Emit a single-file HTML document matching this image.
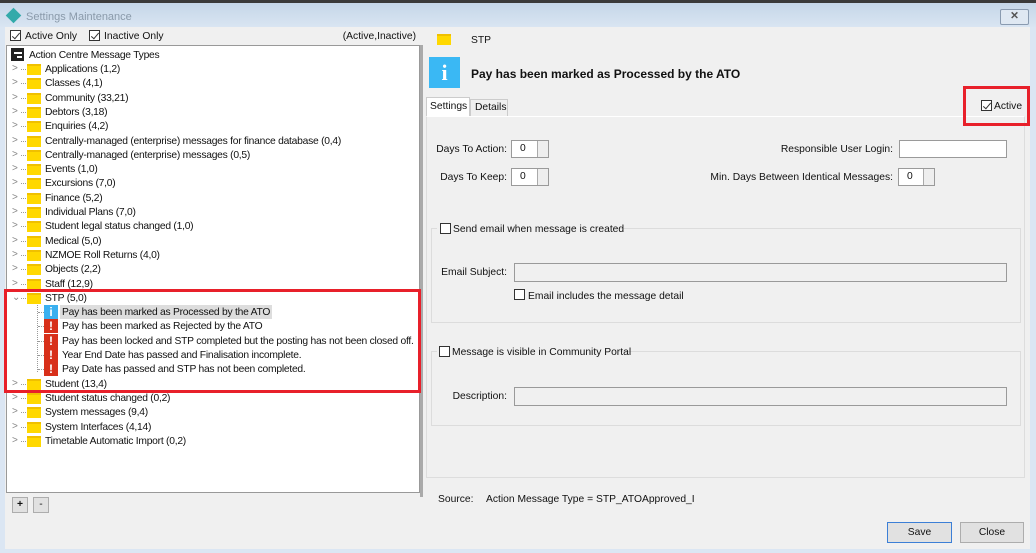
<!DOCTYPE html>
<html><head><meta charset="utf-8"><style>
*{box-sizing:border-box;margin:0;padding:0}
body{width:1036px;height:553px;overflow:hidden;background:#dbe6f3;font-family:"Liberation Sans",sans-serif;font-size:10.3px;color:#111;position:relative}
.a{position:absolute;white-space:nowrap}
.r{position:absolute;white-space:nowrap;text-align:right}
.row{position:absolute;height:14px;line-height:15px;white-space:nowrap;letter-spacing:-0.25px}
.fold{position:absolute;width:14px;height:11px;background:#ffd800;border-top:2px solid #f0c000}
.chev{position:absolute;color:#888;font-size:10px}
.cb{position:absolute;width:11px;height:11px;border:1px solid #333;background:#fff}
.cb.c::after{content:"";position:absolute;left:3px;top:0px;width:3px;height:7px;border:solid #333;border-width:0 1.3px 1.3px 0;transform:rotate(40deg)}
.inp{position:absolute;background:#fff;border:1px solid #9a9a9a}
.inp.g{background:#f0f0f0}
.spin{position:absolute;height:18px;border:1px solid #9a9a9a;background:#fff}
.spin span{position:absolute;left:8px;top:2px}
.spin i{position:absolute;right:0;width:11px;height:8px;border-left:1px solid #aaa;background:#eee}
.ic{position:absolute;width:14px;height:14px;color:#fff;font-weight:bold;text-align:center;line-height:14px;font-size:12px}
.btn{position:absolute;height:21px;border:1px solid #adadad;background:#e1e1e1;text-align:center;line-height:19px}
</style></head><body>
<div class="a" style="left:0;top:0;width:1036px;height:3px;background:#3a3a3a"></div>
<div class="a" style="left:0;top:3px;width:1036px;height:24px;background:linear-gradient(#c5d6e8,#d9e5f2)"></div>
<div class="a" style="left:8px;top:10px;width:11px;height:11px;background:#3aa;transform:rotate(45deg)"></div>
<div class="a" style="left:26px;top:11px;color:#8a9aaa;font-size:11px">Settings Maintenance</div>
<div class="a" style="left:1000px;top:9px;width:29px;height:16px;border:1px solid #8a9bb0;border-radius:2px;background:#dfe8f2;text-align:center;line-height:13px;color:#555;font-weight:bold">✕</div>
<div class="a" style="left:5px;top:27px;width:1025px;height:522px;background:#f0f0f0"></div>

<div class="cb c" style="left:10px;top:30px"></div><div class="a" style="left:25px;top:31px">Active Only</div>
<div class="cb c" style="left:89px;top:30px"></div><div class="a" style="left:104px;top:31px">Inactive Only</div>
<div class="r" style="right:620px;top:31px">(Active,Inactive)</div>
<div class="a" style="left:6px;top:45px;width:414px;height:448px;background:#fff;border:1px solid #999"></div>
<div class="a" style="left:420px;top:45px;width:3px;height:452px;background:#aaa"></div>

<div class="a" style="left:11px;top:48px;width:13px;height:13px;background:#222"></div>
<div class="a" style="left:14px;top:52px;width:8px;height:2px;background:#fff"></div>
<div class="a" style="left:17px;top:56px;width:5px;height:2px;background:#fff"></div>
<div class="row" style="left:29px;top:48px">Action Centre Message Types</div>

<div class="a" style="left:37px;top:305px;width:0;height:67px;border-left:1px dotted #999"></div>

<div id="tree"></div>
<script>
var items=[["Applications (1,2)"],["Classes (4,1)"],["Community (33,21)"],["Debtors (3,18)"],["Enquiries (4,2)"],["Centrally-managed (enterprise) messages for finance database (0,4)"],["Centrally-managed (enterprise) messages (0,5)"],["Events (1,0)"],["Excursions (7,0)"],["Finance (5,2)"],["Individual Plans (7,0)"],["Student legal status changed (1,0)"],["Medical (5,0)"],["NZMOE Roll Returns (4,0)"],["Objects (2,2)"],["Staff (12,9)"],["STP (5,0)","open"],["Pay has been marked as Processed by the ATO","i"],["Pay has been marked as Rejected by the ATO","e"],["Pay has been locked and STP completed but the posting has not been closed off.","e"],["Year End Date has passed and Finalisation incomplete.","e"],["Pay Date has passed and STP has not been completed.","e"],["Student (13,4)"],["Student status changed (0,2)"],["System messages (9,4)"],["System Interfaces (4,14)"],["Timetable Automatic Import (0,2)"]];
var h="";
items.forEach(function(it,i){var t=62+i*14.3;
if(it[1]=="i"||it[1]=="e"){
 h+='<div class="a" style="left:38px;top:'+(t+7)+'px;width:6px;border-top:1px dotted #999"></div>';
 h+='<div class="ic" style="left:44px;top:'+t+'px;background:'+(it[1]=="i"?'#3ab0f0':'#d8301a')+'">'+(it[1]=="i"?'i':'!')+'</div>';
 h+='<div class="row" style="left:60px;top:'+t+'px;padding:0 2px;'+(it[1]=="i"?'background:#ddd;':'')+'">'+it[0]+'</div>';
}else{
 h+='<div class="chev" style="left:12px;top:'+(t+1)+'px">'+(it[1]=="open"?'&#8964;':'&gt;')+'</div>';
 h+='<div class="a" style="left:21px;top:'+(t+7)+'px;width:5px;border-top:1px dotted #999"></div>';
 h+='<div class="fold" style="left:27px;top:'+(t+2)+'px"></div>';
 h+='<div class="row" style="left:45px;top:'+t+'px">'+it[0]+'</div>';
}});
document.getElementById("tree").innerHTML=h;
</script>
<div class="a" style="left:4px;top:289px;width:417px;height:104px;border:3px solid #e8202a"></div>

<div class="btn" style="left:12px;top:497px;width:16px;height:16px;line-height:14px;font-weight:bold">+</div>
<div class="btn" style="left:33px;top:497px;width:16px;height:16px;line-height:14px">-</div>

<!-- right -->
<div class="fold" style="left:437px;top:34px"></div>
<div class="a" style="left:471px;top:35px">STP</div>
<div class="a" style="left:429px;top:57px;width:31px;height:31px;background:#3ab8f4;color:#fff;font:bold 22px 'Liberation Serif',serif;text-align:center;line-height:31px">i</div>
<div class="a" style="left:471px;top:67px;font-weight:bold;font-size:12px">Pay has been marked as Processed by the ATO</div>
<div class="a" style="left:426px;top:97px;width:44px;height:20px;background:#fff;border:1px solid #ccc;border-bottom:none;padding:3px 3px">Settings</div>
<div class="a" style="left:470px;top:99px;width:38px;height:17px;border:1px solid #ccc;border-bottom:none;padding:2px 4px">Details</div>
<div class="a" style="left:426px;top:116px;width:599px;height:362px;border:1px solid #ddd;background:#f0f0f0;border-top-color:#fff"></div>
<div class="cb c" style="left:981px;top:100px"></div><div class="a" style="left:994px;top:101px">Active</div>
<div class="a" style="left:963px;top:86px;width:67px;height:40px;border:3px solid #e8202a"></div>

<div class="r" style="right:529px;top:144px">Days To Action:</div>
<div class="spin" style="left:511px;top:140px;width:38px"><span>0</span><i style="top:0"></i><i style="top:8px"></i></div>
<div class="r" style="right:529px;top:172px">Days To Keep:</div>
<div class="spin" style="left:511px;top:168px;width:38px"><span>0</span><i style="top:0"></i><i style="top:8px"></i></div>
<div class="r" style="right:143px;top:144px">Responsible User Login:</div>
<div class="inp" style="left:899px;top:140px;width:108px;height:18px"></div>
<div class="r" style="right:143px;top:172px">Min. Days Between Identical Messages:</div>
<div class="spin" style="left:898px;top:168px;width:37px"><span>0</span><i style="top:0"></i><i style="top:8px"></i></div>

<div class="a" style="left:431px;top:228px;width:590px;height:95px;border:1px solid #dcdcdc"></div>
<div class="a" style="left:437px;top:222px;width:180px;height:14px;background:#f0f0f0"></div>
<div class="cb" style="left:440px;top:223px"></div><div class="a" style="left:453px;top:224px">Send email when message is created</div>
<div class="r" style="right:529px;top:267px">Email Subject:</div>
<div class="inp g" style="left:514px;top:263px;width:493px;height:19px"></div>
<div class="cb" style="left:514px;top:289px"></div><div class="a" style="left:528px;top:291px">Email includes the message detail</div>

<div class="a" style="left:431px;top:351px;width:590px;height:75px;border:1px solid #dcdcdc"></div>
<div class="a" style="left:437px;top:345px;width:182px;height:14px;background:#f0f0f0"></div>
<div class="cb" style="left:439px;top:346px"></div><div class="a" style="left:452px;top:347px">Message is visible in Community Portal</div>
<div class="r" style="right:529px;top:391px">Description:</div>
<div class="inp g" style="left:514px;top:387px;width:493px;height:19px"></div>

<div class="a" style="left:438px;top:494px">Source:</div>
<div class="a" style="left:486px;top:494px">Action Message Type = STP_ATOApproved_I</div>
<div class="btn" style="left:887px;top:522px;width:65px;border:1px solid #3c7fd6">Save</div>
<div class="btn" style="left:960px;top:522px;width:64px">Close</div>
</body></html>
